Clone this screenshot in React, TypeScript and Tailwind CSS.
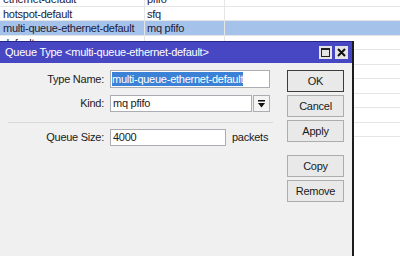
import React from "react";

const rows = [
  { a: "ethernet-default", b: "pfifo" },
  { a: "hotspot-default", b: "sfq" },
  { a: "multi-queue-ethernet-default", b: "mq pfifo", sel: true },
  { a: "default", b: "" },
  { a: "", b: "" },
  { a: "", b: "" },
  { a: "", b: "" },
  { a: "", b: "" },
  { a: "", b: "" },
  { a: "", b: "" },
];

function Btn({ children, def }: { children: React.ReactNode; def?: boolean }) {
  return (
    <div
      className={
        "h-[22px] w-[57px] flex items-center justify-center bg-[#e9e9e9] text-[#1a1a1a] " +
        (def ? "border border-[#3c3c3c]" : "border border-[#adadad]")
      }
    >
      {children}
    </div>
  );
}

export default function App() {
  return (
    <div
      className="relative w-[400px] h-[256px] overflow-hidden bg-white text-[11px] tracking-[-0.25px]"
      style={{ fontFamily: '"Liberation Sans", Arial, sans-serif' }}
    >
      {/* background list */}
      <div className="-mt-[8px] flex flex-col">
        {rows.map((r, i) => (
          <div
            key={i}
            className={
              "h-[14.5px] flex border-b border-[#e6e6e6] text-[#20203a] leading-[14px] " +
              (r.sel ? "bg-[#a5c3ea]" : "")
            }
          >
            <div className="w-[145px] pl-[3px] border-r border-[#e6e6e6] whitespace-nowrap">{r.a}</div>
            <div className="w-[80px] pl-[2px] border-r border-[#e6e6e6] whitespace-nowrap">{r.b}</div>
            <div className="flex-1" />
          </div>
        ))}
      </div>

      {/* dialog window */}
      <div className="absolute left-0 top-[41px] w-[354px] h-[230px] flex flex-col bg-[#f0f0f0] border-r-2 border-[#1c1c1c]">
        {/* title bar */}
        <div className="h-[22px] flex items-center bg-[#4747c4] border-t border-[#25258a] pl-[5px] pr-[4px]">
          <div className="flex-1 text-white whitespace-nowrap">Queue Type &lt;multi-queue-ethernet-default&gt;</div>
          <div className="flex gap-[3px]">
            <div className="w-[13px] h-[13px] bg-[#e4e4e4] flex items-center justify-center">
              <svg width="9" height="9" viewBox="0 0 9 9">
                <rect x="0.5" y="0.5" width="8" height="8" fill="none" stroke="#222" strokeWidth="1" />
                <rect x="0" y="0" width="9" height="2" fill="#222" />
              </svg>
            </div>
            <div className="w-[13px] h-[13px] bg-[#e4e4e4] flex items-center justify-center">
              <svg width="9" height="9" viewBox="0 0 9 9">
                <path d="M1 1 L8 8 M8 1 L1 8" stroke="#111" strokeWidth="2" />
              </svg>
            </div>
          </div>
        </div>

        {/* body */}
        <div className="flex text-[#1a1a1a]">
          {/* form */}
          <div className="w-[273px] pt-[7px] flex flex-col">
            <div className="flex items-center h-[18px]">
              <div className="w-[104px] text-right">Type Name:</div>
              <div className="ml-[6px] w-[160px] h-[18px] bg-white border border-[#abadb3] flex items-center pl-[1px]">
                <span className="bg-[#3b82d6] text-white leading-[14px] whitespace-nowrap">multi-queue-ethernet-default</span>
              </div>
            </div>
            <div className="flex items-center h-[17px] mt-[7px]">
              <div className="w-[104px] text-right">Kind:</div>
              <div className="ml-[6px] w-[142px] h-[17px] bg-white border border-[#abadb3] flex items-center pl-[2px]">
                mq pfifo
              </div>
              <div className="ml-[1px] w-[17px] h-[17px] bg-[#f4f4f4] border border-[#abadb3] flex items-center justify-center">
                <svg width="7" height="8" viewBox="0 0 7 8">
                  <rect x="0" y="0" width="7" height="1.5" fill="#111" />
                  <path d="M0 3 H7 L3.5 7.5 Z" fill="#111" />
                </svg>
              </div>
            </div>
            <div className="mt-[10px] ml-[8px] h-px bg-[#d9d9d9]" />
            <div className="flex items-center h-[17px] mt-[6px]">
              <div className="w-[104px] text-right">Queue Size:</div>
              <div className="ml-[6px] w-[116px] h-[17px] bg-white border border-[#abadb3] flex items-center pl-[2px]">
                4000
              </div>
              <div className="ml-[6px]">packets</div>
            </div>
          </div>

          {/* buttons */}
          <div className="ml-[14px] pt-[7px] flex flex-col gap-[3px]">
            <Btn def>OK</Btn>
            <Btn>Cancel</Btn>
            <Btn>Apply</Btn>
            <div className="h-[7px]" />
            <Btn>Copy</Btn>
            <Btn>Remove</Btn>
          </div>
        </div>
      </div>
    </div>
  );
}
